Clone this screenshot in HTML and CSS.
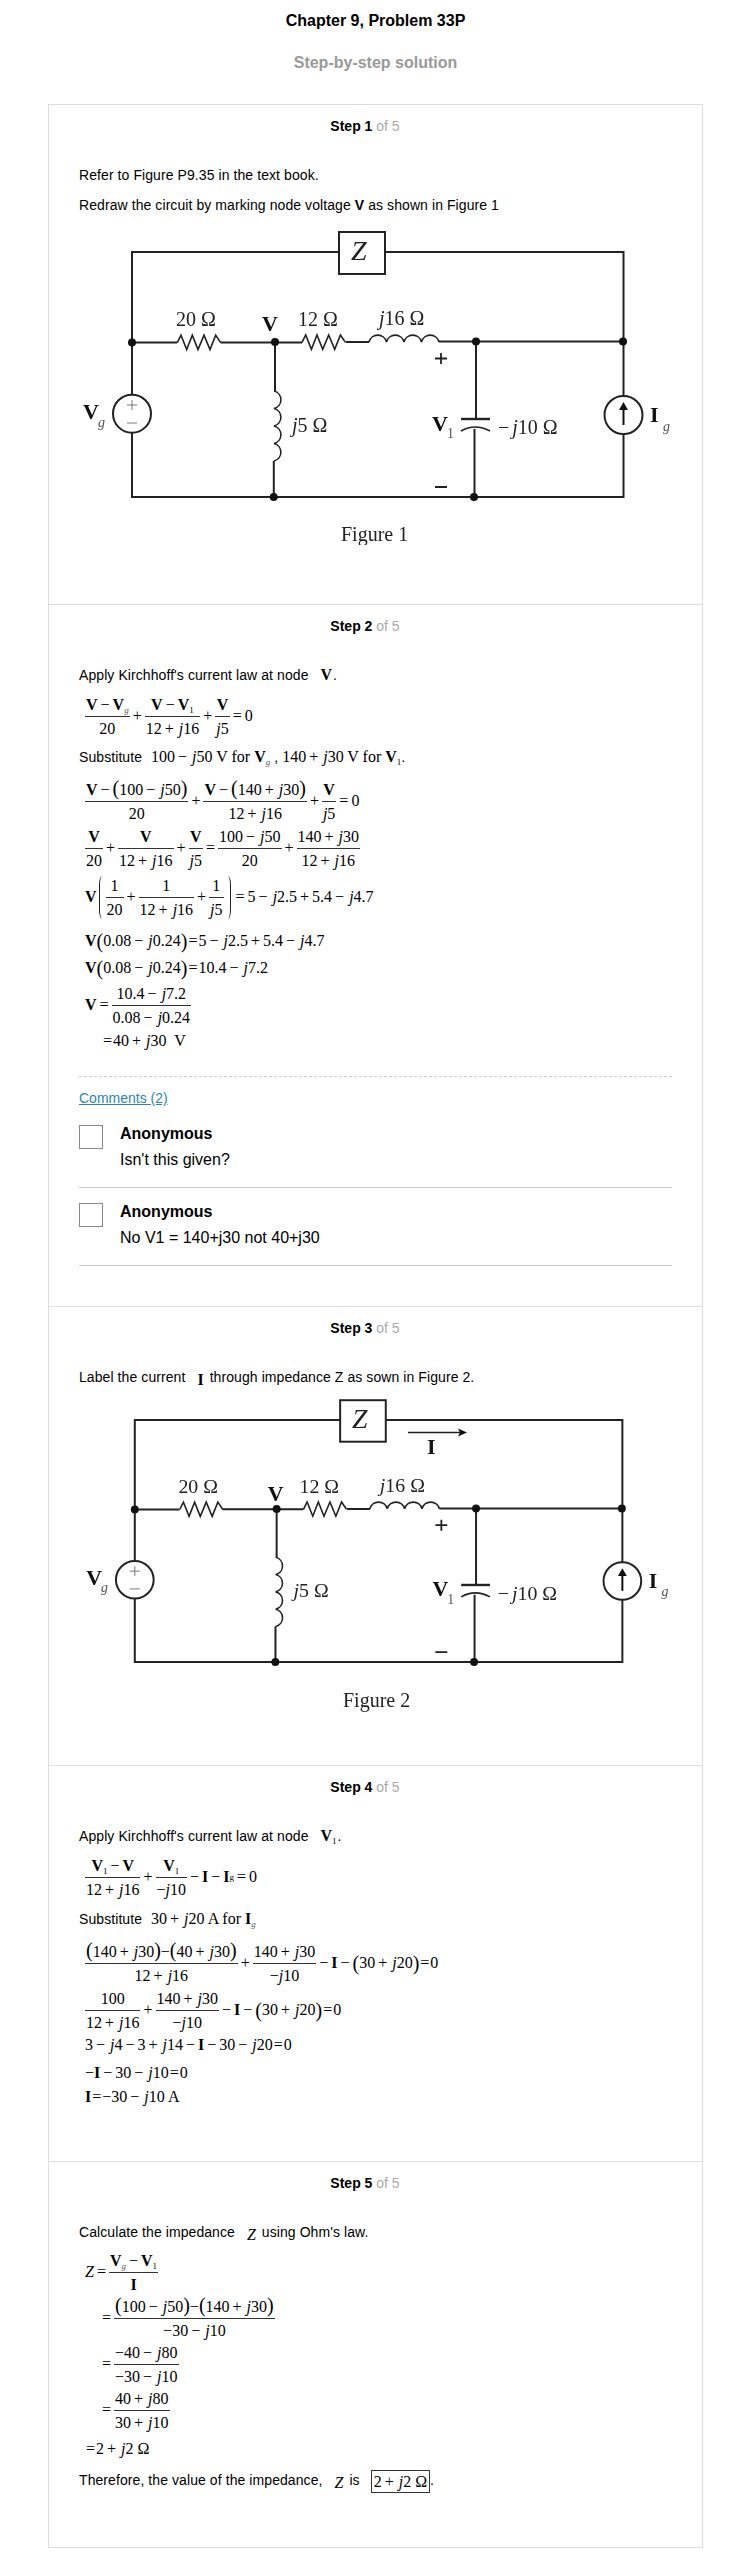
FILE: index.html
```html
<!DOCTYPE html>
<html lang="en">
<head>
<meta charset="utf-8">
<title>Chapter 9, Problem 33P</title>
<link rel="stylesheet" href="styles.css">
</head>
<body>
<h1 class="title">Chapter 9, Problem 33P</h1>
<h2 class="subtitle">Step-by-step solution</h2>
<main class="card">

<section class="step s1">
  <div class="label"><b>Step 1</b> <span>of 5</span></div>
  <p class="line">Refer to Figure P9.35 in the text book.</p>
  <p class="line mt10">Redraw the circuit by marking node voltage <b>V</b> as shown in Figure 1</p>
  <svg class="fig fig1" viewBox="79 225 592 320" aria-label="Figure 1">
    <g class="wire">
      <path d="M132 394.7V252H339M385 252H623.5V396M623.5 434V497H132V432.7"/>
      <path d="M132 342.6H177M220.7 342.4H302M346 342H369M439 341.5H623.5M275 342V391M273.8 461V497M476 341.5V419M474.5 429V497"/>
      <rect x="339" y="232" width="46" height="42"/>
      <circle cx="132" cy="413.7" r="19"/>
      <circle cx="623.5" cy="415" r="19"/>
    </g>
    <g class="coil">
      <path d="M177.3 342.6l3.7 -7.4l5.7 14.4l5.6 -14.4l5.7 14.4l6 -14.4l6 14.4l5.7 -14.4l5 7.4"/>
      <path d="M302 342.4l3.7 -7.4l5.7 14.4l5.6 -14.4l5.7 14.4l6 -14.4l6 14.4l5.7 -14.4l5 7.4"/>
      <path d="M369 342a9 9 0 0 1 17.5 0a9 9 0 0 1 17.5 0a9 9 0 0 1 17.5 0a9 9 0 0 1 17.5 0"/>
      <path d="M274 391a9 9 0 0 1 0 17.5a9 9 0 0 1 0 17.5a9 9 0 0 1 0 17.5a9 9 0 0 1 0 17.5"/>
      <path class="plate" d="M461 419H490"/>
      <path d="M461 431Q475 423 490 431"/>
    </g>
    <g class="dots">
      <circle cx="132" cy="342.6" r="4"/><circle cx="275" cy="342" r="4"/><circle cx="476" cy="341.5" r="4"/><circle cx="623" cy="341.5" r="4"/><circle cx="273.7" cy="497" r="4"/><circle cx="474" cy="497" r="4"/>
    </g>
    <path class="faint" d="M132 400V410M127 405H137M127 423H137"/>
    <path class="arrow" d="M623.5 425V408"/>
    <path class="dots" d="M623.5 402L619 410H628Z"/>
    <path class="thick" d="M435 487H447M435 358.5H447M441 353V364"/>
    <text class="ct zi" x="351" y="260">Z</text>
    <text class="ct" x="176" y="326">20 Ω</text>
    <text class="ct vb" x="262" y="330.5">V</text>
    <text class="ct" x="298" y="326">12 Ω</text>
    <text class="ct" x="379" y="325"><tspan class="it">j</tspan>16 Ω</text>
    <text class="ct" x="292" y="431.5"><tspan class="it">j</tspan>5 Ω</text>
    <text class="ct" x="498" y="434">−<tspan class="it" dx="3">j</tspan>10 Ω</text>
    <text class="ct vb" x="83" y="419">V</text><text class="ct sub it" x="98" y="426.5">g</text>
    <text class="ct vb" x="432" y="430.5">V</text><text class="ct sub" x="447" y="438">1</text>
    <text class="ct vb" x="650" y="422">I</text><text class="ct sub it" x="663" y="430.5">g</text>
    <text class="ct cap" x="341" y="541">Figure 1</text>
  </svg>
</section>

<section class="step s2">
  <div class="label"><b>Step 2</b> <span>of 5</span></div>
  <p class="line">Apply Kirchhoff's current law at node <span class="m node"><b>V</b></span>.</p>
  <div class="eq mt8"><span class="frac"><span><b>V</b><i class="o">−</i><b>V</b><sub class="g">g</sub></span><span>20</span></span><i class="op">+</i><span class="frac"><span><b>V</b><i class="o">−</i><b>V</b><sub>1</sub></span><span>12<i class="o">+</i><em>j</em>16</span></span><i class="op">+</i><span class="frac"><span><b>V</b></span><span><em>j</em>5</span></span><i class="op">=</i>0</div>
  <p class="line mt8">Substitute <span class="m gapl">100<i class="o">−</i><em>j</em>50 V for <b>V</b><sub class="g">g</sub></span> , <span class="m">140<i class="o">+</i><em>j</em>30 V for <b>V</b><sub>1</sub></span>.</p>
  <div class="eq mt11"><span class="frac"><span><b>V</b><i class="o">−</i><span class="p">(</span>100<i class="o">−</i><em>j</em>50<span class="p">)</span></span><span>20</span></span><i class="op">+</i><span class="frac"><span><b>V</b><i class="o">−</i><span class="p">(</span>140<i class="o">+</i><em>j</em>30<span class="p">)</span></span><span>12<i class="o">+</i><em>j</em>16</span></span><i class="op">+</i><span class="frac"><span><b>V</b></span><span><em>j</em>5</span></span><i class="op">=</i>0</div>
  <div class="eq mt1"><span class="frac"><span><b>V</b></span><span>20</span></span><i class="op">+</i><span class="frac"><span><b>V</b></span><span>12<i class="o">+</i><em>j</em>16</span></span><i class="op">+</i><span class="frac"><span><b>V</b></span><span><em>j</em>5</span></span><i class="op">=</i><span class="frac"><span>100<i class="o">−</i><em>j</em>50</span><span>20</span></span><i class="op">+</i><span class="frac"><span>140<i class="o">+</i><em>j</em>30</span><span>12<i class="o">+</i><em>j</em>16</span></span></div>
  <div class="eq mt3"><b>V</b><span class="bp bpl"></span><span class="frac"><span>1</span><span>20</span></span><i class="op">+</i><span class="frac"><span>1</span><span>12<i class="o">+</i><em>j</em>16</span></span><i class="op">+</i><span class="frac"><span>1</span><span><em>j</em>5</span></span><span class="bp bpr"></span><i class="op">=</i>5<i class="o">−</i><em>j</em>2.5<i class="o">+</i>5.4<i class="o">−</i><em>j</em>4.7</div>
  <div class="eq row mt11"><b>V</b><span class="p">(</span>0.08<i class="o">−</i><em>j</em>0.24<span class="p">)</span><i class="tight">=</i>5<i class="o">−</i><em>j</em>2.5<i class="o">+</i>5.4<i class="o">−</i><em>j</em>4.7</div>
  <div class="eq row mt7"><b>V</b><span class="p">(</span>0.08<i class="o">−</i><em>j</em>0.24<span class="p">)</span><i class="tight">=</i>10.4<i class="o">−</i><em>j</em>7.2</div>
  <div class="eq mt4"><b>V</b><i class="op">=</i><span class="frac"><span>10.4<i class="o">−</i><em>j</em>7.2</span><span>0.08<i class="o">−</i><em>j</em>0.24</span></span></div>
  <div class="eq row ind2 mt3"><i class="tight">=</i>40<i class="o">+</i><em>j</em>30&nbsp; V</div>
  <div class="comments">
    <a class="clink" href="#">Comments (2)</a>
    <div class="comment first">
      <span class="avatar"></span>
      <div><div class="who">Anonymous</div><div class="said">Isn't this given?</div></div>
    </div>
    <div class="comment">
      <span class="avatar"></span>
      <div><div class="who">Anonymous</div><div class="said">No V1 = 140+j30 not 40+j30</div></div>
    </div>
  </div>
</section>

<section class="step s3">
  <div class="label"><b>Step 3</b> <span>of 5</span></div>
  <p class="line">Label the current <span class="m node lowb"><b>I</b></span>through impedance Z as sown in Figure 2.</p>
  <svg class="fig fig2" viewBox="79 1390 592 330" aria-label="Figure 2">
    <g transform="translate(3.86 1169) scale(.992 .988)">
      <g class="wire">
        <path d="M132 394.7V252H339M385 252H623.5V396M623.5 434V497H132V432.7"/>
        <path d="M132 342.6H177M220.7 342.4H302M346 342H369M439 341.5H623.5M275 342V391M273.8 461V497M476 341.5V419M474.5 429V497"/>
        <rect x="339" y="232" width="46" height="42"/>
        <circle cx="132" cy="413.7" r="19"/>
        <circle cx="623.5" cy="415" r="19"/>
      </g>
      <g class="coil">
        <path d="M177.3 342.6l3.7 -7.4l5.7 14.4l5.6 -14.4l5.7 14.4l6 -14.4l6 14.4l5.7 -14.4l5 7.4"/>
        <path d="M302 342.4l3.7 -7.4l5.7 14.4l5.6 -14.4l5.7 14.4l6 -14.4l6 14.4l5.7 -14.4l5 7.4"/>
        <path d="M369 342a9 9 0 0 1 17.5 0a9 9 0 0 1 17.5 0a9 9 0 0 1 17.5 0a9 9 0 0 1 17.5 0"/>
        <path d="M274 391a9 9 0 0 1 0 17.5a9 9 0 0 1 0 17.5a9 9 0 0 1 0 17.5a9 9 0 0 1 0 17.5"/>
        <path class="plate" d="M461 419H490"/>
        <path d="M461 431Q475 423 490 431"/>
      </g>
      <g class="dots">
        <circle cx="132" cy="342.6" r="4"/><circle cx="275" cy="342" r="4"/><circle cx="476" cy="341.5" r="4"/><circle cx="623" cy="341.5" r="4"/><circle cx="273.7" cy="497" r="4"/><circle cx="474" cy="497" r="4"/>
      </g>
      <path class="faint" d="M132 400V410M127 405H137M127 423H137"/>
      <path class="arrow" d="M623.5 425V408"/>
      <path class="dots" d="M623.5 402L619 410H628Z"/>
      <path class="thick" d="M435 487H447M435 358.5H447M441 353V364"/>
      <text class="ct zi" x="351" y="260">Z</text>
      <text class="ct" x="176" y="326">20 Ω</text>
      <text class="ct vb" x="266" y="334">V</text>
      <text class="ct" x="298" y="326">12 Ω</text>
      <text class="ct" x="379" y="325"><tspan class="it">j</tspan>16 Ω</text>
      <text class="ct" x="292" y="431.5"><tspan class="it">j</tspan>5 Ω</text>
      <text class="ct" x="498" y="434">−<tspan class="it" dx="3">j</tspan>10 Ω</text>
      <text class="ct vb" x="83" y="419">V</text><text class="ct sub it" x="98" y="426.5">g</text>
      <text class="ct vb" x="432" y="430.5">V</text><text class="ct sub" x="447" y="438">1</text>
      <text class="ct vb" x="650" y="422">I</text><text class="ct sub it" x="663" y="430.5">g</text>
    </g>
    <path class="arrowline" d="M408 1430.5H464"/>
    <path class="dots" d="M467 1430.5L458 1426.5L460 1430.5L458 1434.5Z"/>
    <text class="ct vb" x="427" y="1452">I</text>
    <text class="ct cap" x="343" y="1705">Figure 2</text>
  </svg>
</section>

<section class="step s4">
  <div class="label"><b>Step 4</b> <span>of 5</span></div>
  <p class="line">Apply Kirchhoff's current law at node <span class="m node"><b>V</b><sub>1</sub></span>.</p>
  <div class="eq mt8"><span class="frac"><span><b>V</b><sub>1</sub><i class="o">−</i><b>V</b></span><span>12<i class="o">+</i><em>j</em>16</span></span><i class="op">+</i><span class="frac"><span><b>V</b><sub>1</sub></span><span>−<em>j</em>10</span></span><i class="o">−</i><b>I</b><i class="o">−</i><b>I</b><sub>g</sub><i class="op">=</i>0</div>
  <p class="line mt9">Substitute <span class="m gapl">30<i class="o">+</i><em>j</em>20 A for <b>I</b><sub class="g">g</sub></span></p>
  <div class="eq mt11"><span class="frac"><span><span class="p">(</span>140<i class="o">+</i><em>j</em>30<span class="p">)</span>−<span class="p">(</span>40<i class="o">+</i><em>j</em>30<span class="p">)</span></span><span>12<i class="o">+</i><em>j</em>16</span></span><i class="op">+</i><span class="frac"><span>140<i class="o">+</i><em>j</em>30</span><span>−<em>j</em>10</span></span><i class="o">−</i><b>I</b><i class="o">−</i><span class="p">(</span>30<i class="o">+</i><em>j</em>20<span class="p">)</span><i class="tight">=</i>0</div>
  <div class="eq mt1"><span class="frac"><span>100</span><span>12<i class="o">+</i><em>j</em>16</span></span><i class="op">+</i><span class="frac"><span>140<i class="o">+</i><em>j</em>30</span><span>−<em>j</em>10</span></span><i class="o">−</i><b>I</b><i class="o">−</i><span class="p">(</span>30<i class="o">+</i><em>j</em>20<span class="p">)</span><i class="tight">=</i>0</div>
  <div class="eq row mt2">3<i class="o">−</i><em>j</em>4<i class="o">−</i>3<i class="o">+</i><em>j</em>14<i class="o">−</i><b>I</b><i class="o">−</i>30<i class="o">−</i><em>j</em>20<i class="tight">=</i>0</div>
  <div class="eq row mt8">−<b>I</b><i class="o">−</i>30<i class="o">−</i><em>j</em>10<i class="tight">=</i>0</div>
  <div class="eq row mt4"><b>I</b><i class="tight">=</i>−30<i class="o">−</i><em>j</em>10 A</div>
</section>

<section class="step s5">
  <div class="label"><b>Step 5</b> <span>of 5</span></div>
  <p class="line mt1">Calculate the impedance <span class="m node lowb"><em>Z</em></span>using Ohm's law.</p>
  <div class="eq mt7"><em>Z</em><i class="op">=</i><span class="frac"><span><b>V</b><sub class="g">g</sub><i class="o">−</i><b>V</b><sub>1</sub></span><span><b>I</b></span></span></div>
  <div class="eq ind"><i class="op">=</i><span class="frac"><span><span class="p">(</span>100<i class="o">−</i><em>j</em>50<span class="p">)</span>−<span class="p">(</span>140<i class="o">+</i><em>j</em>30<span class="p">)</span></span><span>−30<i class="o">−</i><em>j</em>10</span></span></div>
  <div class="eq ind"><i class="op">=</i><span class="frac"><span>−40<i class="o">−</i><em>j</em>80</span><span>−30<i class="o">−</i><em>j</em>10</span></span></div>
  <div class="eq ind"><i class="op">=</i><span class="frac"><span>40<i class="o">+</i><em>j</em>80</span><span>30<i class="o">+</i><em>j</em>10</span></span></div>
  <div class="eq row mt6"><i class="tight">=</i>2<i class="o">+</i><em>j</em>2 Ω</div>
  <p class="line mt11">Therefore, the value of the impedance, <span class="m node lowb"><em>Z</em></span>is <span class="m answer">2<i class="o">+</i><em>j</em>2 Ω</span>.</p>
</section>

</main>
</body>
</html>
```

FILE: styles.css
```css
* { box-sizing: border-box; }

body {
  margin: 0;
  background: #fff;
  color: #000;
  font-family: "Liberation Sans", Arial, sans-serif;
  font-size: 14px;
}

.title, .subtitle {
  margin: 0;
  width: 751px;
  text-align: center;
  font-size: 16px;
  font-weight: bold;
  line-height: 20px;
}
.title { padding-top: 11px; }
.subtitle { margin-top: 22px; color: #999; }

.card {
  margin: 31px 0 0 48px;
  width: 655px;
  border: 1px solid #ddd;
}

.step { padding: 11px 30px 0; }
.step + .step { border-top: 1px solid #ddd; }
.s1 { padding-bottom: 59px; }
.s2 { padding-bottom: 40px; }
.s3 { padding-bottom: 43px; }
.s4 { padding-bottom: 54px; }
.s5 { padding-bottom: 57px; }

.label {
  padding-right: 21px;
  text-align: center;
  line-height: 20px;
  margin-bottom: 29px;
}
.label span { color: #aaa; }

.line { margin: 0; line-height: 20px; height: 20px; white-space: nowrap; letter-spacing: .08px; }

.mt1 { margin-top: 1px; }
.mt2 { margin-top: 2px; }
.mt3 { margin-top: 3px; }
.mt4 { margin-top: 4px; }
.mt6 { margin-top: 6px; }
.mt7 { margin-top: 7px; }
.mt8 { margin-top: 8px; }
.mt9 { margin-top: 9px; }
.mt10 { margin-top: 10px; }
.mt11 { margin-top: 11px; }

.fig { display: block; width: 592px; filter: blur(.3px); }
.fig1 { height: 320px; margin-top: 10px; }
.fig2 { height: 330px; margin-top: 5px; }

.wire, .coil, .arrow, .arrowline, .thick, .faint { fill: none; }
.wire { stroke: #222; stroke-width: 2; }
.coil { stroke: #222; stroke-width: 1.6; }
.coil .plate { stroke-width: 2.4; }
.dots { fill: #111; stroke: none; }
.faint { stroke: #777; stroke-width: 1; }
.arrow { stroke: #111; stroke-width: 2; }
.arrowline { stroke: #222; stroke-width: 1.5; }
.thick { stroke: #222; stroke-width: 1.8; }

.ct { font-family: "Liberation Serif", "Times New Roman", serif; font-size: 20px; fill: #222; }
.ct .it, .ct.it { font-style: italic; }
.ct.vb { font-weight: bold; font-size: 22px; fill: #111; }
.ct.sub { font-size: 14px; fill: #555; }
.ct.zi { font-style: italic; font-size: 28px; }
.ct.cap { font-size: 20px; }

.m, .eq {
  font-family: "Liberation Serif", "Times New Roman", serif;
  font-size: 16px;
  letter-spacing: 0;
}
.m { line-height: 0; }
.gapl { margin-left: 5px; }
.node { margin-left: 8px; margin-right: 1px; font-size: 16px; }
.lowb { position: relative; top: 3px; margin-right: 6px; }

.eq {
  display: flex;
  align-items: center;
  margin-left: 6px;
  white-space: nowrap;
  line-height: 20px;
}
.row { height: 20px; }
.ind { margin-left: 20px; }
.ind2 { margin-left: 23px; }

i { font-style: normal; }
em { font-style: italic; }
.o { margin: 0 3px; }
.o + em { margin-left: 2px; }
.op { margin: 0 3px; }
.tight { margin: 0 1px; }

sub { font-size: 9px; line-height: 0; vertical-align: -3px; font-family: "Liberation Serif", serif; }
sub.g { font-style: italic; color: #555; }

.frac {
  display: inline-flex;
  flex-direction: column;
  text-align: center;
}
.frac > span { display: block; line-height: 23px; height: 22px; padding: 0 1px; }
.frac > span:first-child { box-sizing: content-box; height: 23px; border-bottom: 1px solid #333; }

.p { font-size: 20px; line-height: 0; font-weight: normal; }

.bp { display: block; width: 6px; height: 43px; flex: none; border: 0 solid #222; }
.bpl { border-left-width: 1.2px; border-radius: 7px / 22px; margin: 0 1px 0 2px; }
.bpr { border-right-width: 1.2px; border-radius: 7px / 22px; margin: 0 2px 0 1px; }

.answer {
  display: inline-block;
  margin-left: 7px;
  padding: 0 2px;
  height: 23px;
  line-height: 21px;
  border: 1px solid #333;
  vertical-align: middle;
}

.comments { margin-top: 25px; border-top: 1px dashed #ccc; padding-top: 11px; }
.clink { display: block; width: max-content; line-height: 20px; color: #2b86b5; text-decoration: underline; }
.comment {
  display: flex;
  padding: 14px 0 17px;
  border-bottom: 1px solid #ccc;
}
.comment.first { padding-top: 16px; }
.avatar { flex: none; width: 24px; height: 24px; border: 1px solid #888; margin: 1px 17px 0 0; }
.who { font-size: 16px; font-weight: bold; line-height: 20px; }
.said { font-size: 16px; line-height: 20px; margin-top: 6px; }
```
